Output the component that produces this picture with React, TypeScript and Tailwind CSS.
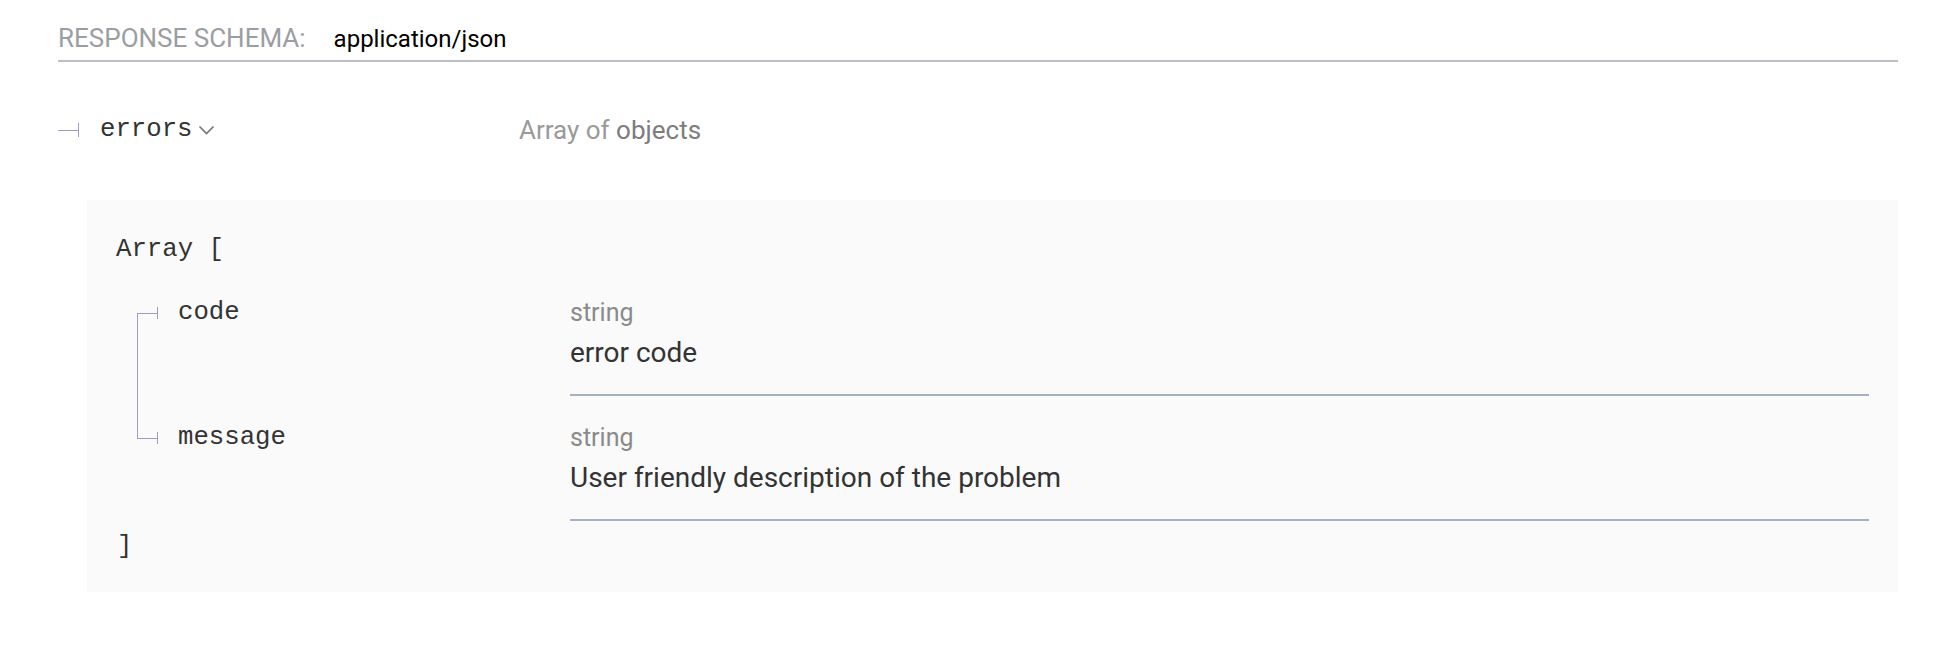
import { ReactNode } from "react";

const mono = "font-['Liberation_Mono','Courier_New',monospace]";
const sans = "font-['Roboto','Liberation_Sans',sans-serif]";

function Chevron() {
  return (
    <svg width="17" height="10" viewBox="0 0 17 10" className="ml-[5px] mt-[10px]">
      <polyline points="1.5,1.5 8.5,8.5 15.5,1.5" fill="none" stroke="#777" strokeWidth="1.7" />
    </svg>
  );
}

// one nested property row, with its piece of the tree line
function FieldRow({
  name,
  type,
  description,
  first,
  last,
}: {
  name: string;
  type: string;
  description: ReactNode;
  first?: boolean;
  last?: boolean;
}) {
  return (
    <div className="flex">
      {/* name cell */}
      <div className="flex w-[454px] shrink-0 pl-[21px]">
        <div className="flex flex-col w-[21px] shrink-0">
          <div className={`h-[42px] ${first ? "" : "border-l border-[#9c9cc8]"}`} />
          <div className="flex items-center h-[12px] -mt-[6px]">
            <div className="w-[20px] h-px bg-[#9c9cc8]" />
            <div className="w-px h-[12px] bg-[#9c9cc8]" />
          </div>
          <div className={`flex-1 -mt-[6px] ${last ? "" : "border-l border-[#9c9cc8]"}`} />
        </div>
        <div className={`${mono} text-[25.7px] leading-[30px] text-[#333] pt-[27px] pl-[20px]`}>
          {name}
        </div>
      </div>
      {/* type + description cell */}
      <div className="flex-1 pt-[27px] pb-[21px] border-b-2 border-[#a5b3c0]">
        <div className={`${sans} text-[25px] leading-[30px] text-[#8a8a8a]`}>{type}</div>
        <div className={`${sans} text-[28px] leading-[40px] text-[#333] mt-[5px]`}>
          {description}
        </div>
      </div>
    </div>
  );
}

export default function App() {
  return (
    <div className="w-[1950px] h-[668px] bg-white pl-[58px] pr-[52px] overflow-hidden">
      {/* Header */}
      <div className="flex items-baseline pt-[22px] pb-[5px] border-b-2 border-[#bcc0c4]">
        <span className={`${sans} text-[26px] leading-[32px] uppercase text-[#9a9ea2]`}>
          Response Schema:
        </span>
        <span className={`${sans} text-[24px] leading-[32px] text-black ml-[28px]`}>
          application/json
        </span>
      </div>

      {/* errors row */}
      <div className="flex items-start mt-[53px]">
        <div className="flex items-start w-[461px] shrink-0">
          <div className="flex items-center h-[30px]">
            <div className="w-[20px] h-px bg-[#9c9cc8]" />
            <div className="w-px h-[14px] bg-[#9c9cc8]" />
          </div>
          <span className={`${mono} text-[25.7px] leading-[30px] text-[#333] ml-[21px]`}>
            errors
          </span>
          <Chevron />
        </div>
        <div className={`${sans} text-[26px] leading-[30px]`}>
          <span className="text-[#9a9a9a]">Array of </span>
          <span className="text-[#7d7d7d]">objects</span>
        </div>
      </div>

      {/* nested schema panel */}
      <div className="ml-[29px] mt-[55px] bg-[#fafafa] px-[29px] pt-[35px] pb-[30px]">
        <div className={`${mono} text-[25.7px] leading-[30px] text-[#333]`}>Array [</div>
        <div className="mt-[6px]">
          <FieldRow name="code" type="string" description="error code" first />
          <FieldRow
            name="message"
            type="string"
            description="User friendly description of the problem"
            last
          />
        </div>
        <div className={`${mono} text-[25.7px] leading-[30px] text-[#333] mt-[11px] ml-[1px]`}>
          ]
        </div>
      </div>
    </div>
  );
}
